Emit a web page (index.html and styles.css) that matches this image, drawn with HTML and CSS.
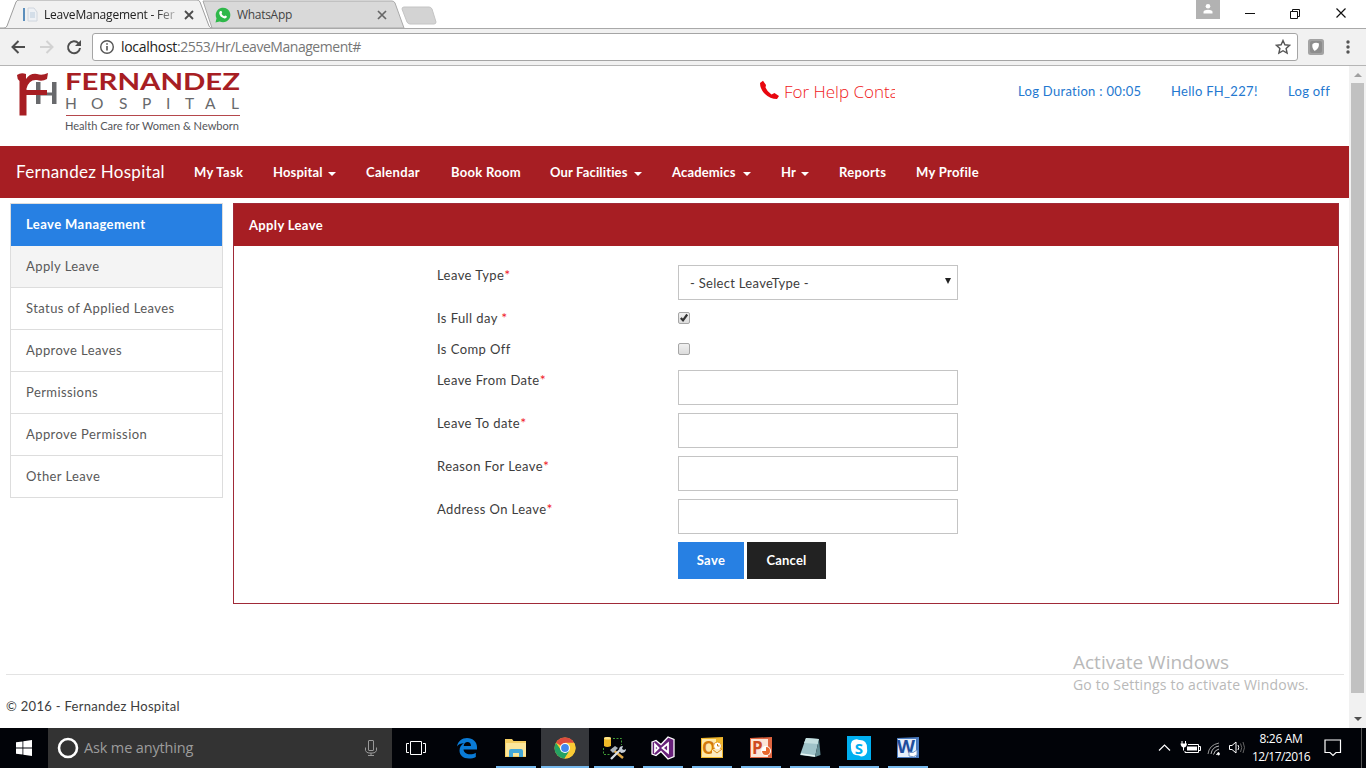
FILE: index.html
```html
<!DOCTYPE html>
<html lang="en">
<head>
<meta charset="utf-8">
<title>LeaveManagement - Fernandez Hospital</title>
<link rel="stylesheet" href="styles.css">
</head>
<body>
<div class="tabstrip">
  <svg class="tab-shapes" width="450" height="28" viewBox="0 0 450 28">
    <path d="M203 1h189q2 0 3 2l9 25H212z" fill="#d9d9d9" stroke="#a9a9a9"/>
    <path d="M404 7h25q2 0 3 2l4 13q0 2-2 2h-24q-2 0-3-2l-5-13q0-2 2-2z" fill="#d3d3d3" stroke="#c4c4c4"/>
    <path d="M0 28h4q2 0 3-2l9-24q1-2 3-2h178q2 0 3 2l9 24q1 2 3 2" fill="#f1f1f1" stroke="#9d9d9d"/>
  </svg>
  <div class="tab tab-active">
    <svg width="16" height="16" viewBox="0 0 16 16"><path d="M1 1h2v13H1z" fill="#5c8fbd"/><path d="M6 1h6l3 4v9H6z" fill="#eef1f5" stroke="#d0d6de"/><path d="M8 6h5M8 8h5M8 10h5" stroke="#b9cbdc"/></svg>
    <span class="tab-title t1">LeaveManagement - Fer</span>
    <svg class="close" width="10" height="10" viewBox="0 0 10 10"><path d="M1 1l8 8M9 1l-8 8" stroke="#4c4c4c" stroke-width="1.800"/></svg>
  </div>
  <div class="tab tab-two">
    <svg width="16" height="16" viewBox="0 0 16 16"><path d="M.5 15.500l1-4.200A7.300 7.300 0 1 1 4.700 14.500z" fill="#2fb84a"/><path d="M5.300 4l1.200.1.700 1.700-.7 1q.9 1.800 2.700 2.500l1-.9 1.700.9q0 2.200-2.400 2.200Q4.500 10 4.200 6q.1-1.300 1.100-2z" fill="#fff"/></svg>
    <span class="tab-title t2">WhatsApp</span>
    <svg class="close" width="10" height="10" viewBox="0 0 10 10"><path d="M1 1l8 8M9 1l-8 8" stroke="#666" stroke-width="1.700"/></svg>
  </div>
  <div class="window-controls">
    <div class="user"><svg width="12" height="12" viewBox="0 0 12 12" fill="#fff"><circle cx="6" cy="3.200" r="2.300"/><path d="M1.500 10.500V9q0-2 4.500-2.200Q10.500 7 10.500 9v1.500z"/></svg></div>
    <svg class="ctl" width="158" height="28" viewBox="0 0 158 28" fill="none" stroke="#111"><path d="M37 13.500h10"/><path d="M82.500 11.500h7v7h-7z M84.500 11.500v-2h7v7h-2"/><path d="M128.500 8.500l9 9M137.500 8.500l-9 9" stroke-width="1.200"/></svg>
  </div>
</div>
<div class="toolbar">
  <svg class="navicons" width="92" height="37" viewBox="0 0 92 37" fill="none" stroke="#4d4d4d" stroke-width="2"><path d="M25 19H12.500M18.500 13l-6 6 6 6"/><path d="M40 19h12M46.500 13l6 6-6 6" stroke="#d2d2d2"/><path d="M78.500 15.300A6 6 0 1 0 80 20"/><path d="M81 12v6h-6z" fill="#4d4d4d" stroke="none"/></svg>
  <div class="address">
    <svg width="16" height="16" viewBox="0 0 16 16" fill="none" stroke="#555"><circle cx="8" cy="8" r="6.300" stroke-width="1.400"/><path d="M8 7v4.500M8 4.200v1.600" stroke-width="1.600"/></svg>
    <span class="host">localhost</span><span class="path">:2553/Hr/LeaveManagement#</span>
    <svg class="star" width="16" height="16" viewBox="0 0 16 16"><path d="M8 1.500l1.900 4.300 4.700.5-3.500 3.200 1 4.600L8 11.700l-4.100 2.400 1-4.600L1.400 6.300l4.700-.5z" fill="none" stroke="#555" stroke-width="1.400"/></svg>
  </div>
  <svg class="ext" width="16" height="16" viewBox="0 0 16 16"><rect width="16" height="16" rx="2.500" fill="#a3a3a3"/><rect x="2" y="2" width="12" height="12" rx="2" fill="#8d8d8d"/><path d="M4.500 5q3-2 6.500-.5.300 5-4.300 7.500Q3.500 9 4.500 5z" fill="#fff"/></svg>
  <svg class="dots" width="4" height="14" viewBox="0 0 4 14" fill="#555"><circle cx="2" cy="2" r="1.700"/><circle cx="2" cy="7" r="1.700"/><circle cx="2" cy="12" r="1.700"/></svg>
</div>
<div class="viewport">
  <div class="page">
    <header class="top">
      <svg class="logo" width="226" height="62" viewBox="0 0 226 62">
        <path d="M21 12h4.500v10.500H37V12h4.500v22H37v-8.500H25.500V34H21z" fill="#68696c"/>
        <path d="M2 5q4-3 9-1v5Q15 3 22 4q5 2 11-1l-1 6q-5 3-10 1-8-1-10.500 8.500V20H32v5H11.500v20.500H4.500V11Q2 9 2 5z" fill="#a71e23"/>
        <text class="logo-a" x="50" y="19.500" textLength="175" lengthAdjust="spacingAndGlyphs">FERNANDEZ</text>
        <text class="logo-b" y="38.500" x="50 76 104 127 151 170 190 216">HOSPITAL</text>
        <path d="M51 45.500h174" stroke="#b5484c"/>
        <text class="logo-c" x="50" y="59.500" textLength="174" lengthAdjust="spacingAndGlyphs">Health Care for Women &amp; Newborn</text>
      </svg>
      <div class="help"><svg width="20" height="20" viewBox="0 0 20 20"><path d="M4 .8L1 3Q1 9 6 14t12 5l2-3-4.500-3-3 1.500Q8 11.500 6.500 7.500L7 5z" fill="#e8070f"/></svg><span class="help-text">For Help Conta</span></div>
      <div class="account"><span class="l1">Log Duration : 00:05</span><span class="l2">Hello FH_227!</span><span class="l3">Log off</span></div>
    </header>
    <nav class="navbar">
      <span class="brand">Fernandez Hospital</span>
      <span class="n n1">My Task</span>
      <span class="n n2 drop">Hospital</span>
      <span class="n n3">Calendar</span>
      <span class="n n4">Book Room</span>
      <span class="n n5 drop">Our Facilities</span>
      <span class="n n6 drop">Academics</span>
      <span class="n n7 drop">Hr</span>
      <span class="n n8">Reports</span>
      <span class="n n9">My Profile</span>
    </nav>
    <main class="content">
      <aside class="side">
        <div class="item head"><span>Leave Management</span></div>
        <div class="item current"><span>Apply Leave</span></div>
        <div class="item"><span>Status of Applied Leaves</span></div>
        <div class="item"><span>Approve Leaves</span></div>
        <div class="item"><span>Permissions</span></div>
        <div class="item"><span>Approve Permission</span></div>
        <div class="item"><span>Other Leave</span></div>
      </aside>
      <section class="panel">
        <h1 class="panel-head"><span>Apply Leave</span></h1>
        <form class="form">
          <div class="row"><label><span>Leave Type</span><i>*</i></label><div class="field select"><span>- Select LeaveType -</span><b class="arrow"></b></div></div>
          <div class="row short"><label><span>Is Full day </span><i>*</i></label><div class="check"><svg width="12" height="12" viewBox="0 0 12 12"><path d="M2.800 6L5 8.300 9.200 2.500" fill="none" stroke="#333" stroke-width="2.200"/></svg></div></div>
          <div class="row short"><label><span>Is Comp Off</span></label><div class="check"></div></div>
          <div class="row"><label><span>Leave From Date</span><i>*</i></label><div class="field"></div></div>
          <div class="row"><label><span>Leave To date</span><i>*</i></label><div class="field"></div></div>
          <div class="row"><label><span>Reason For Leave</span><i>*</i></label><div class="field"></div></div>
          <div class="row"><label><span>Address On Leave</span><i>*</i></label><div class="field"></div></div>
          <div class="actions"><div class="btn save"><span>Save</span></div><div class="btn cancel"><span>Cancel</span></div></div>
        </form>
      </section>
    </main>
    <footer class="foot"><span>© 2016 - Fernandez Hospital</span></footer>
  </div>
  <div class="scrollbar"><i class="up"></i><div class="thumb"></div><i class="down"></i></div>
  <div class="watermark"><span class="w1">Activate Windows</span><span class="w2">Go to Settings to activate Windows.</span></div>
</div>
<div class="taskbar">
  <div class="start"><svg width="16" height="16" viewBox="0 0 16 16" fill="#fff"><path d="M0 2.300L6.500 1.400v6.200H0zM7.300 1.300L16 0v7.600H7.300zM0 8.400h6.500v6.200L0 13.700zM7.300 8.400H16V16l-8.700-1.200z"/></svg></div>
  <div class="search"><svg width="22" height="22" viewBox="0 0 22 22"><circle cx="11" cy="11" r="9" fill="none" stroke="#fff" stroke-width="2.600"/></svg><span class="ask">Ask me anything</span>
    <svg class="mic" width="12" height="16" viewBox="0 0 12 16" fill="none" stroke="#999"><rect x="3.500" y=".5" width="5" height="10" rx=".5"/><path d="M.5 7.500v3q1 2.500 3.500 2.500h4q2.500 0 3.500-2.500v-3M6 13v2.500M3 15.500h6"/></svg></div>
  <div class="taskview"><svg width="20" height="14" viewBox="0 0 20 14" fill="none" stroke="#fff"><path d="M4.500.5h11v13h-11zM3 2.500H.5v9H3M17 2.500h2.500v9H17"/></svg></div>
  <div class="apps">
    <div class="app"><svg width="22" height="22" viewBox="0 0 22 22"><path d="M1 9.500C2 4 6 1 11 1c6 0 10 4 10 9v2.500H7.500c.3 3 3 4.800 6.500 4.800 2.300 0 4.200-.6 5.800-1.600v4.200c-2 1.100-4.200 1.600-6.800 1.600C7 21.500 3.500 18 3.500 13.500c0-3.200 1.700-5.800 4.500-7.200C4.800 6.300 2.500 7.500 1 9.500zM7.700 9H15c0-2.500-1.400-4-3.500-4S8 6.500 7.700 9z" fill="#0a7bd6"/></svg></div>
    <div class="app open"><svg width="22" height="20" viewBox="0 0 22 20"><path d="M0 1h7l1.500 2H21v16H0z" fill="#f4ce62"/><path d="M1 5h20v13H1z" fill="#fbe69b"/><path d="M4 19v-6q0-2 2-2h10q2 0 2 2v6h-4v-4H8v4z" fill="#43a8d8"/></svg></div>
    <div class="app open focus"><svg width="22" height="22" viewBox="0 0 22 22"><circle cx="11" cy="11" r="10.500" fill="#fbcb35"/><path d="M11 11L1.900 5.800A10.500 10.500 0 0 1 20.100 5.800z" fill="#dd4b3e"/><path d="M1.900 5.800A10.500 10.500 0 0 0 10.500 21.500l5-7.500L11 11 7 13z" fill="#25a263"/><path d="M20.100 5.800H11v3l4.500 5-5 7.700A10.500 10.500 0 0 0 20.100 5.800z" fill="#fbcb35"/><circle cx="11" cy="11" r="5" fill="#fff"/><circle cx="11" cy="11" r="3.900" fill="#4387ec"/></svg></div>
    <div class="app open"><svg width="24" height="24" viewBox="0 0 24 24"><path d="M2 2q3-2 7 0v8q-4 2-7 0z" fill="#eeb928"/><ellipse cx="5.500" cy="2.300" rx="3.500" ry="1.300" fill="#ffe68a"/><path d="M11 2.500h8.500V9M1.500 12v6.500H8" stroke="#3f9a35" stroke-dasharray="2 1.500" fill="none"/><path d="M10 13l11 9" stroke="#dfa94a" stroke-width="2.500"/><path d="M8 14l5-4 3 2-5 5z" fill="#aab3bd"/><path d="M9 23l9-9" stroke="#d7dde4" stroke-width="2.300"/><path d="M17 14q0-4 4-4l-1 3 2 1 2-1q0 4-5 4z" fill="#c4ccd6"/></svg></div>
    <div class="app open"><svg width="24" height="24" viewBox="0 0 24 24"><path d="M1 6l4-1.500 5 4L17 1l6 2.500v17L17 23l-7-7.500-5 4L1 18z" fill="#68217a" stroke="#fff" stroke-width="1.300"/><path d="M4 8.500v7L7.500 12zM17 7.500v9L11.500 12z" fill="#68217a" stroke="#fff" stroke-width="1.800"/></svg></div>
    <div class="app open"><svg width="22" height="22" viewBox="0 0 22 22"><path d="M0 1L22 0v21H0z" fill="#f0b72e"/><path d="M1 2h14v18H1z" fill="#ffe9a8"/><text class="office out" x="1" y="17">O</text><circle cx="16.500" cy="9" r="4" fill="#fff" stroke="#e9a226"/><path d="M16.500 7v2h2" fill="none" stroke="#c77d12"/><path d="M11 12h10v8H11z" fill="#fbeac1"/><path d="M11 12l5 4 5-4" fill="none" stroke="#d78b18"/></svg></div>
    <div class="app open"><svg width="22" height="22" viewBox="0 0 22 22"><path d="M0 1L22 0v21H0z" fill="#df6540"/><path d="M1 2h17v18H1z" fill="#fbe4d7"/><text class="office pow" x="2" y="17">P</text><circle cx="16" cy="14" r="5" fill="#fff"/><path d="M16 14V10a4 4 0 1 1-4 4z" fill="#e9692e"/></svg></div>
    <div class="app open"><svg width="22" height="22" viewBox="0 0 22 22"><path d="M7 1l13 1-4 18-15-2z" fill="#9fc3c9"/><path d="M7 1l13 1-1.200 5L5 6z" fill="#c4dfe0"/><path d="M20 2l1.500 16-5.500 2z" fill="#638d94"/><path d="M2 17l14 2" stroke="#e8f7f5" stroke-width="1.500"/></svg></div>
    <div class="app open"><svg width="24" height="24" viewBox="0 0 24 24"><path d="M0 0h24v24H0z" fill="#00aff0"/><path d="M5 5q4-3 7-1 8-.5 8 8 1 6-3 8-3 1-5-.5-8 0-8-7.500-1-4 1-7z" fill="#fff"/><text class="skype" x="12" y="17.500" text-anchor="middle">S</text></svg></div>
    <div class="app open"><svg width="22" height="22" viewBox="0 0 22 22"><path d="M0 1L22 0v21H0z" fill="#4a7bc0"/><path d="M1 2h18v18H1z" fill="#e6effa"/><text class="office word" x="0" y="16" textLength="18" lengthAdjust="spacingAndGlyphs">W</text><path d="M12 15q4 2 8-2v5q-3 3-8 1z" fill="#fff" stroke="#7899c6"/></svg></div>
  </div>
  <div class="tray">
    <svg width="90" height="40" viewBox="0 0 90 40" fill="none" stroke="#fff"><path d="M4 22.500l5.500-5.500 5.500 5.500" stroke-width="1.200"/><path d="M33 16.500h10.500v8H30V23M43.500 18.500h2v4h-2M27 13v3M30.500 13v3M28.500 18.500v4"/><path d="M25.500 15.500h6.500q-.5 4-3.250 4t-3.250-4z M32 18.500h10v4h-10z" fill="#fff" stroke="none"/><path d="M53 26q1-9 11-11" stroke="#999"/><path d="M56 26q1-7 8-8M58.500 26.500q1-4.500 5.500-5.500" stroke="#bbb"/><path d="M61.500 27q.5-2 2.500-2.500"/><circle cx="63.500" cy="26" r="1.400" fill="#fff" stroke="none"/><path d="M74.500 17.500h2.500l4-3.500v11l-4-3.500h-2.500zM83 17q1.500 2.500 0 5"/><path d="M85.500 15.500q2.500 4 0 8.500M88 14q3 5.500 0 11" stroke="#666"/></svg>
    <div class="clock"><span class="time">8:26 AM</span><span class="date">12/17/2016</span></div>
    <svg class="note" width="18" height="18" viewBox="0 0 18 18" fill="none" stroke="#fff" stroke-width="1.200"><path d="M1 1h15.500v12.500h-4.500L9 16.500l-3-3H1z"/></svg>
    <div class="peek"></div>
  </div>
</div>
</body>
</html>
```
FILE: styles.css
```css
* { box-sizing: border-box; }
body { margin: 0; width: 1366px; height: 768px; overflow: hidden; display: flex; flex-direction: column; background: #fff; font: 13px/20px Lato, sans-serif; color: #3d3d3d; position: relative; }
svg { display: block; flex: none; }
span { white-space: pre; flex: none; }
h1 { margin: 0; font-size: inherit; }

.tabstrip { position: relative; height: 28px; display: flex; font: 12px/28px "Open Sans", sans-serif; }
.tab-shapes { position: absolute; left: 0; top: 0; z-index: 0; }
.tab { position: relative; display: flex; align-items: center; height: 28px; padding-top: 2px; }
.tab-active { width: 207px; padding-left: 22px; }
.tab-two { width: 194px; padding-left: 8px; }
.tab-title { margin-left: 6px; width: 134px; color: #222; }
.t1 { letter-spacing: -.2px; -webkit-mask-image: linear-gradient(90deg, #000 112px, transparent 138px); }
.t2 { letter-spacing: -.3px; color: #444; }
.close { margin-left: 6px; }
.window-controls { margin-left: auto; display: flex; }
.user { width: 24px; height: 19px; background: #b2b2b2; display: flex; justify-content: center; padding-top: 3px; margin-right: -12px; }
.ctl { position: relative; }

.toolbar { height: 38px; background: #f1f1f1; border-top: 1px solid #a9a9a9; border-bottom: 1px solid #b5b5b5; display: flex; align-items: center; }
.navicons { margin-top: -1px; }
.address { width: 1206px; height: 28px; background: #fff; border: 1px solid #a5a5a5; border-radius: 3px; display: flex; align-items: center; padding: 0 6px; font: 14px/26px "Open Sans", sans-serif; }
.host { margin-left: 6px; color: #222; letter-spacing: -.3px; }
.path { color: #777; letter-spacing: -.46px; }
.star { margin-left: auto; }
.ext { margin-left: 10px; }
.dots { margin-left: 22px; }

.viewport { position: relative; height: 662px; display: flex; }
.page { width: 1349px; }
.top { height: 80px; display: flex; }
.logo { margin: 4px 0 0 15px; }
.logo-a { font: 700 23px Lato, sans-serif; fill: #a71e23; }
.logo-b { font: 15.500px Lato, sans-serif; fill: #68696c; }
.logo-c { font: 10.500px Lato, sans-serif; fill: #55565a; }
.help { flex: none; width: 136px; margin: 14px 0 0 518px; display: flex; overflow: hidden; height: 26px; }
.help-text { margin-left: 5px; color: #f01822; font: 300 17px/24px "Open Sans", sans-serif; }
.account { display: flex; margin: 15px 0 0 123px; color: #2478d0; letter-spacing: .3px; }
.l1 { width: 123px; margin-right: 30px; }
.l2 { width: 87px; margin-right: 30px; }

.navbar { height: 52px; background: #a71e23; color: #fff; display: flex; align-items: center; padding-left: 16px; font-weight: 700; letter-spacing: .2px; }
.brand { font-size: 17px; font-weight: 400; width: 148px; margin-right: 30px; letter-spacing: .28px; }
.n { margin-right: 30px; letter-spacing: .3px; }
.n1 { width: 49px; }
.n2 { width: 63px; }
.n3 { width: 55px; }
.n4 { width: 69px; }
.n5 { width: 92px; }
.n6 { width: 79px; }
.n7 { width: 28px; }
.n8 { width: 47px; }
.drop { display: flex; align-items: center; letter-spacing: .15px; }
.drop::after { content: ""; margin-left: auto; margin-top: 3px; border: 4px solid transparent; border-top-color: #fff; border-bottom: 0; }

.content { display: flex; padding: 5px 10px 0; height: 406px; }
.side { width: 213px; height: 295px; border: 1px solid #ddd; margin-right: 10px; color: #595959; letter-spacing: .42px; }
.item { height: 42px; padding: 10px 15px; border-bottom: 1px solid #ddd; }
.item:last-child { border-bottom: 0; }
.head { background: #2780e3; border-bottom-color: #2780e3; color: #fff; font-weight: 700; }
.current { background: #f4f4f4; }
.panel { width: 1106px; height: 401px; border: 1px solid #a02a38; }
.panel-head { height: 42px; background: #a71e23; color: #fff; padding: 11px 15px; font-weight: 700; line-height: 20px; letter-spacing: .35px; }
.form { padding: 19px 0 0 203px; letter-spacing: .42px; }
.row { display: grid; grid-template-columns: 241px 280px; height: 43px; align-items: start; }
.row i { color: #f0202a; font-style: normal; font-size: 14px; }
.short { height: 31px; }
.field { height: 35px; border: 1px solid #c4c4c4; }
.select { display: flex; justify-content: space-between; padding: 7px 6px 0 11px; letter-spacing: .3px; }
.arrow { border: 3px solid transparent; border-top: 6px solid #222; border-bottom: 0; height: 6px; margin-top: 5px; }
.check { width: 12px; height: 12px; margin-top: 4px; border: 1px solid #a6a6a6; border-radius: 2px; background: linear-gradient(#f0f0f0, #dcdcdc); }
.check svg { margin: -1px; }
.actions { display: flex; gap: 3px; padding-left: 241px; letter-spacing: .2px; }
.btn { height: 37px; display: flex; align-items: center; justify-content: center; color: #fff; font-weight: 700; padding-bottom: 1px; }
.save { width: 66px; background: #2780e3; letter-spacing: .4px; }
.cancel { width: 79px; background: #222; }
.foot { margin: 70px 5px 0 6px; padding-top: 21px; border-top: 1px solid #e3e3e3; letter-spacing: .3px; }

.scrollbar { width: 17px; background: #f1f1f1; display: flex; flex-direction: column; align-items: center; }
.up { border: 4px solid transparent; border-bottom-color: #a0a0a0; border-top: 0; margin-top: 7px; }
.thumb { width: 13px; height: 610px; background: #c1c1c1; margin-top: 6px; }
.down { border: 4px solid transparent; border-top-color: #505050; border-bottom: 0; margin-top: 24px; }
.watermark { position: absolute; left: 1073px; top: 582px; display: flex; flex-direction: column; color: #b9b9b9; font-family: "Open Sans", sans-serif; }
.w1 { font-size: 19px; line-height: 28px; }
.w2 { font-size: 14px; line-height: 18px; letter-spacing: .18px; }

.taskbar { height: 40px; background: #010308; display: flex; align-items: center; color: #fff; font-family: "Open Sans", sans-serif; }
.start { width: 48px; padding-left: 16px; }
.search { width: 344px; height: 40px; background: #333; display: flex; align-items: center; padding: 0 15px 0 9px; }
.ask { margin-left: 5px; font-size: 14.500px; color: #9c9c9c; letter-spacing: -.15px; }
.mic { margin-left: auto; }
.taskview { width: 51px; padding-left: 14px; }
.apps { display: flex; gap: 1px; }
.app { width: 48px; height: 40px; display: flex; align-items: center; justify-content: center; background-repeat: no-repeat; }
.open { background-image: linear-gradient(#76b9ed, #76b9ed); background-size: 40px 2px; background-position: 4px 38px; }
.focus { background-color: #36383c; background-size: 48px 2px; background-position: 0 38px; }
.office { font: 700 17px "Open Sans", sans-serif; }
.out { fill: #d27a0c; }
.pow { fill: #cf4a1f; }
.word { fill: #1f4e9c; }
.skype { font: 700 15px "Open Sans", sans-serif; fill: #00aff0; }
.tray { margin-left: auto; display: flex; height: 40px; width: 211px; }
.clock { width: 70px; display: flex; flex-direction: column; align-items: center; font-size: 12px; line-height: 18px; padding-top: 2px; margin-left: 1px; letter-spacing: -.55px; }
.time { letter-spacing: -.3px; }
.note { margin: 11px 0 0 8px; }
.peek { margin-left: auto; width: 5px; border-left: 1px solid #555; }
```
